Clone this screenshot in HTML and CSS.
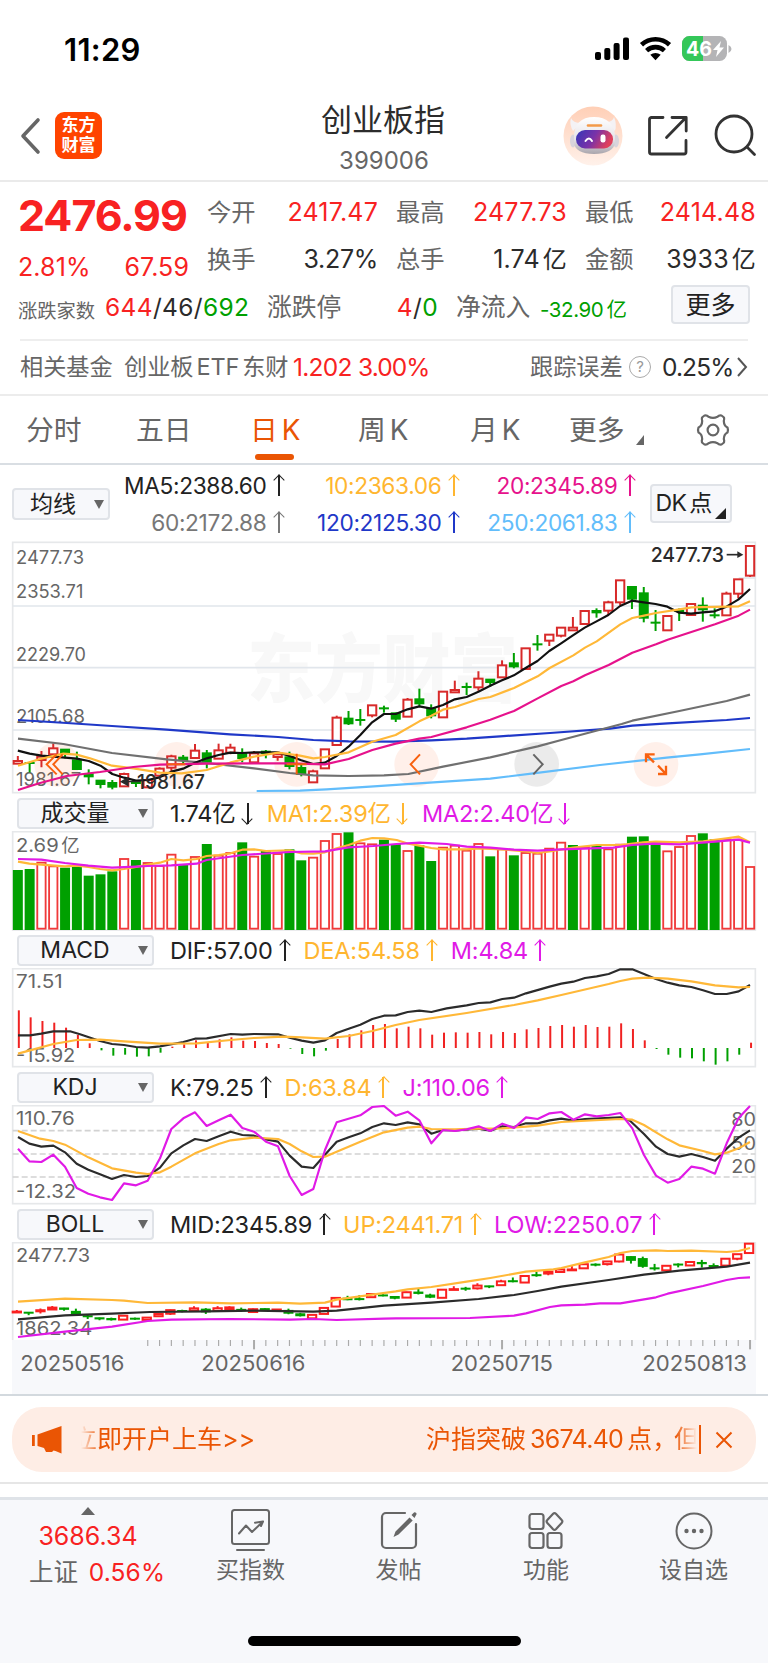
FILE: index.html
```html
<!DOCTYPE html>
<html lang="zh-CN">
<head>
<meta charset="utf-8">
<title>创业板指 399006</title>
<link rel="stylesheet" href="styles.css">
</head>
<body>
<div class="screen">
  <div class="status">
    <span class="clock">11:29</span>
    <svg class="status-icons" width="140" height="30" viewBox="0 0 140 30">
      <g fill="#000"><rect x="0" y="18" width="6" height="8" rx="2"/><rect x="9.3" y="14" width="6" height="12" rx="2"/><rect x="18.6" y="9" width="6" height="17" rx="2"/><rect x="28" y="3.5" width="6" height="22.5" rx="2"/></g>
      <g fill="none" stroke="#000" stroke-width="4.6"><path d="M46.5 10.8a20.5 20.5 0 0 1 28 0"/><path d="M51.6 16.6a13.2 13.2 0 0 1 17.8 0"/></g>
      <path d="M55.3 20.8a8 8 0 0 1 10.4 0L60.5 26.3z"/>
      <rect x="87" y="2" width="45" height="25" rx="7.5" fill="#b4b4b6"/>
      <path d="M94.500 2H108V27H94.500A7.500 7.500 0 0 1 87 19.500V9.500A7.500 7.500 0 0 1 94.500 2z" fill="#34c759"/>
      <path d="M133.500 11v8q3-1.500 3-4t-3-4z" fill="#b4b4b6"/>
      <text x="91" y="22" class="battery-text" textLength="26" lengthAdjust="spacingAndGlyphs">46</text>
      <path d="M126 7l-8 9h4.500l-1.500 7 8-9.500h-4.500z" fill="#fff"/>
    </svg>
  </div>

  <header class="header">
    <svg class="back" width="22" height="38" viewBox="0 0 22 38"><path d="M19 3L4 19l15 16" fill="none" stroke="#666" stroke-width="3.600" stroke-linecap="round" stroke-linejoin="round"/></svg>
    <div class="brand"><span>东方</span><span>财富</span></div>
    <div class="title"><h1>创业板指</h1><p>399006</p></div>
    <svg class="robot" width="60" height="60" viewBox="0 0 60 60">
      <defs>
        <linearGradient id="halo" x1="0" y1="0" x2="0" y2="1"><stop offset="0" stop-color="#ffcfb6"/><stop offset="1" stop-color="#fff1ea"/></linearGradient>
        <linearGradient id="visor" x1="0" y1="0" x2="1" y2="0.300"><stop offset="0" stop-color="#3436b8"/><stop offset="0.550" stop-color="#7a32a8"/><stop offset="1" stop-color="#e0405c"/></linearGradient>
        <linearGradient id="shell" x1="0" y1="0" x2="0" y2="1"><stop offset="0" stop-color="#fff"/><stop offset="0.600" stop-color="#e6e3e8"/><stop offset="1" stop-color="#a9a5ac"/></linearGradient>
      </defs>
      <circle cx="30" cy="30" r="29.500" fill="url(#halo)"/>
      <path d="M8 12q-2 6 2 13l8-8q-8 0-10-5zM51 11q3 7 1 14l-9-9q7 0 8-5z" fill="#f4f2f5"/>
      <ellipse cx="10" cy="35" rx="3" ry="6.500" fill="#d8d4dc"/><ellipse cx="53" cy="35" rx="3" ry="6.500" fill="#d8d4dc"/>
      <path d="M11 31C11 18 18 11 31 11S52 18 52 31v5c0 8-9 12-21 12S11 44 11 36z" fill="url(#shell)"/>
      <path d="M25 19.500h13" stroke="#f39a4a" stroke-width="2.600" fill="none" stroke-linecap="round"/>
      <rect x="13" y="24" width="37" height="18.500" rx="9" fill="url(#visor)"/>
      <path d="M22.500 35q3.500-5 6.500 0" stroke="#fff" stroke-width="2" fill="none" stroke-linecap="round"/>
      <rect x="37.500" y="28.500" width="5" height="8" rx="2.200" fill="#fff"/>
    </svg>
    <svg class="share" width="42" height="42" viewBox="0 0 42 42"><g fill="none" stroke="#333" stroke-width="2.800" stroke-linecap="round" stroke-linejoin="round"><path d="M16 2.500H4.500a2 2 0 0 0-2 2V37a2 2 0 0 0 2 2H37a2 2 0 0 0 2-2V25.500"/><path d="M25 2.500h14.200V16M39 2.500L19.500 22.500"/></g></svg>
    <svg class="search" width="44" height="44" viewBox="0 0 44 44"><g fill="none" stroke="#333" stroke-width="2.800" stroke-linecap="round"><circle cx="20" cy="20" r="18"/><path d="M33 33l7.500 7.500"/></g></svg>
  </header>

  <section class="quote">
    <div class="quote-main">
      <div class="last">
        <div class="price">2476.99</div>
        <div class="change"><span>2.81%</span><span>67.59</span></div>
      </div>
      <dl class="facts">
        <div><dt>今开</dt><dd class="up">2417.47</dd></div>
        <div><dt>最高</dt><dd class="up">2477.73</dd></div>
        <div><dt>最低</dt><dd class="up">2414.48</dd></div>
        <div><dt>换手</dt><dd class="tight">3.27%</dd></div>
        <div><dt>总手</dt><dd>1.74<i>亿</i></dd></div>
        <div><dt>金额</dt><dd>3933<i>亿</i></dd></div>
      </dl>
    </div>
    <div class="breadth">
      <span class="label small">涨跌家数</span>
      <span class="num"><b class="up">644</b>/46/<b class="down">692</b></span>
      <span class="label">涨跌停</span>
      <span class="num limit"><b class="up">4</b>/<b class="down">0</b></span>
      <span class="label flow">净流入</span>
      <span class="down net">-32.90<i>亿</i></span>
      <button class="more">更多</button>
    </div>
    <div class="fund">
      <span class="label f-name">相关基金</span>
      <span class="label etf">创业板<i>ETF</i>东财</span>
      <span class="up f-price">1.202</span>
      <span class="up f-pct">3.00%</span>
      <span class="label track">跟踪误差</span>
      <span class="help">?</span>
      <span class="f-err">0.25%</span>
      <svg width="12" height="22" viewBox="0 0 12 22"><path d="M2 2l8 9-8 9" fill="none" stroke="#555" stroke-width="2"/></svg>
    </div>
  </section>

  <nav class="tabs">
    <span>分时</span><span>五日</span><span class="active">日<i>K</i></span><span>周<i>K</i></span><span>月<i>K</i></span><span class="tab-more">更多</span>
    <svg class="corner" width="8" height="10" viewBox="0 0 8 10"><path d="M8 0v10H0z" fill="#666"/></svg>
    <svg class="gear" width="34" height="34" viewBox="-17 -17 34 34"><g fill="none" stroke="#666" stroke-width="2.200" stroke-linejoin="round"><path d="M-8.500-14.500Q-6-15-4.500-13.200Q0-11 4.500-13.200Q6-15 8.500-14.500L11-12.500Q11.500-10.500 10.800-9Q11-4 14.500-2.500Q15.500 0 14.500 2.500Q11 4 10.800 9Q11.500 10.500 11 12.500L8.500 14.500Q6 15 4.500 13.200Q0 11-4.500 13.200Q-6 15-8.500 14.500L-11 12.500Q-11.500 10.500-10.800 9Q-11 4-14.500 2.500Q-15.500 0-14.500-2.500Q-11-4-10.800-9Q-11.500-10.500-11-12.500Z"/><circle r="5.400"/></g></svg>
  </nav>

  <section class="averages">
    <button class="picker">均线<i class="caret"></i></button>
    <div class="ma-grid">
      <span class="c-ink">MA5:2388.60<i class="arr"></i></span><span class="c-gold">10:2363.06<i class="arr"></i></span><span class="c-pink">20:2345.89<i class="arr"></i></span>
      <span class="c-gray">60:2172.88<i class="arr"></i></span><span class="c-blue">120:2125.30<i class="arr"></i></span><span class="c-sky">250:2061.83<i class="arr"></i></span>
    </div>
    <button class="dk"><span>DK</span>点<svg width="11" height="11" viewBox="0 0 11 11"><path d="M11 0v11H0z" fill="#222"/></svg></button>
  </section>

  <svg class="chart main-chart" id="kline" viewBox="0 15 2304 762"></svg>

  <div class="ind-row">
    <button class="picker wide"><span>成交量</span><i class="caret"></i></button>
    <span class="c-ink">1.74亿<i class="arr dn"></i></span><span class="c-gold">MA1:2.39亿<i class="arr dn"></i></span><span class="c-mag">MA2:2.40亿<i class="arr dn"></i></span>
  </div>
  <svg class="chart sub-chart" id="volume" viewBox="0 108 2304 300"></svg>

  <div class="ind-row">
    <button class="picker wide"><span>MACD</span><i class="caret"></i></button>
    <span class="c-ink">DIF:57.00<i class="arr"></i></span><span class="c-gold">DEA:54.58<i class="arr"></i></span><span class="c-mag">M:4.84<i class="arr"></i></span>
  </div>
  <svg class="chart sub-chart" id="macd" viewBox="0 519 2304 300"></svg>

  <div class="ind-row">
    <button class="picker wide"><span>KDJ</span><i class="caret"></i></button>
    <span class="c-ink">K:79.25<i class="arr"></i></span><span class="c-gold">D:63.84<i class="arr"></i></span><span class="c-mag">J:110.06<i class="arr"></i></span>
  </div>
  <svg class="chart sub-chart" id="kdj" viewBox="0 105 2304 300"></svg>

  <div class="ind-row">
    <button class="picker wide"><span>BOLL</span><i class="caret"></i></button>
    <span class="c-ink">MID:2345.89<i class="arr"></i></span><span class="c-gold">UP:2441.71<i class="arr"></i></span><span class="c-mag">LOW:2250.07<i class="arr"></i></span>
  </div>
  <svg class="chart boll-chart" id="boll" viewBox="0 516 2304 456"></svg>

  <div class="promo-wrap">
    <div class="promo">
      <svg class="horn" width="32" height="28" viewBox="0 0 32 28"><path d="M1 9h2.800v11H1zM6.500 8.500L30.500 0v27.500l-6-2.500-2-.500-1.500 1.500h-6l-2-4-6.500-2z" fill="#ea5504"/></svg>
      <div class="ticker"><span class="t1">立即开户上车&gt;&gt;</span><span class="t2">沪指突破<i>3674.40</i>点，</span><span class="t3">但</span></div>
      <i class="bar"></i>
      <svg class="close" width="18" height="18" viewBox="0 0 18 18"><path d="M1.500 1.500l15 15m0-15l-15 15" stroke="#ea5504" stroke-width="2" fill="none"/></svg>
    </div>
  </div>

  <footer class="dock">
    <div class="index">
      <svg width="14" height="8" viewBox="0 0 14 8"><path d="M7 0l7 8H0z" fill="#666"/></svg>
      <b>3686.34</b>
      <p>上证 <em>0.56%</em></p>
    </div>
    <div class="item">
      <svg width="42" height="42" viewBox="0 0 42 42"><g fill="none" stroke="#666" stroke-width="2" stroke-linecap="round" stroke-linejoin="round"><rect x="2" y="1" width="37" height="34" rx="2.500"/><path d="M7 41h27M9 24.500l7-8 6 6.500L33 12.500l-8 1.200M33 12.500l-2 4.500"/></g></svg><span>买指数</span></div>
    <div class="item">
      <svg width="42" height="42" viewBox="0 0 42 42"><g fill="none" stroke="#666" stroke-width="2.200" stroke-linecap="round"><path d="M27 4H8a4 4 0 0 0-4 4v27a4 4 0 0 0 4 4h26a4 4 0 0 0 4-4V15"/></g><path d="M31.500 8.500l3.200 3L20.500 25.500 15.500 28l2-5.500zM33.500 6l2.500-2.500q1-.700 2 .300t.200 2L36.500 9z" fill="#666"/></svg><span>发帖</span></div>
    <div class="item">
      <svg width="42" height="42" viewBox="0 0 42 42"><g fill="none" stroke="#666" stroke-width="2.200"><rect x="4.500" y="5" width="14" height="15" rx="2.500"/><rect x="4.500" y="24" width="14" height="15" rx="2.500"/><rect x="22.500" y="24" width="14" height="15" rx="2.500"/><path d="M28.100 4.800q1.400-1.400 2.800 0l5.800 6.300q1.400 1.400 0 2.800l-5.800 6.300q-1.400 1.400-2.800 0l-5.800-6.300q-1.400-1.400 0-2.800z"/></g></svg><span>功能</span></div>
    <div class="item">
      <svg width="42" height="42" viewBox="0 0 42 42"><circle cx="21" cy="22" r="17.500" fill="none" stroke="#666" stroke-width="2"/><g fill="#666"><circle cx="13.500" cy="22" r="2.200"/><circle cx="21" cy="22" r="2.200"/><circle cx="28.500" cy="22" r="2.200"/></g></svg><span>设自选</span></div>
    <div class="home"></div>
  </footer>
</div>
<script src="charts.js"></script>
</body>
</html>
```
FILE: styles.css
```css
* { box-sizing: border-box; }
body { margin: 0; background: #fff; font-family: Inter, "Noto Sans CJK SC", sans-serif; color: #2b2b2b; }
i, em { font-style: normal; }
h1, p, dl, dd { margin: 0; }
button { font: inherit; color: #222; padding: 0; margin: 0; background: #f7f8fb; border: 2px solid #e0e3e8; border-radius: 4px; }
svg { display: block; flex: none; }
.screen { width: 768px; height: 1663px; overflow: hidden; white-space: nowrap; }

.up { color: #f82222; }
.down { color: #00a000; }
.label { color: #666; }
.c-ink { color: #222; }
.c-gold { color: #ffb630; }
.c-pink { color: #e6128c; }
.c-gray { color: #777; }
.c-blue { color: #1f38c8; }
.c-sky { color: #62bdfb; }
.c-mag { color: #e01ae6; }

.status { height: 90px; display: flex; justify-content: space-between; padding: 34px 33px 0 64px; }
.clock { font-size: 31px; line-height: 31px; font-weight: 600; letter-spacing: 0.3px; color: #000; }
.battery-text { font: 700 20px Inter, sans-serif; fill: #fff; }

.header { height: 92px; display: flex; align-items: flex-start; border-bottom: 2px solid #eaeaea; padding-left: 19px; }
.back { margin-top: 27px; }
.brand { width: 47px; height: 47px; margin: 22px 0 0 14px; border-radius: 9px; background: #ff4400; color: #fff; font-size: 17px; font-weight: 700; line-height: 20px; padding-top: 3px; display: flex; flex-direction: column; align-items: center; }
.title { width: 200px; margin: 8px 80px 0 181px; text-align: center; }
.title h1 { font-size: 31px; font-weight: 400; line-height: 44px; color: #2c2c2c; }
.title p { font-size: 24px; line-height: 38px; color: #666; padding-left: 2px; }
.robot { margin-top: 16px; }
.share { margin: 25px 0 0 24px; }
.search { margin: 24px 0 0 25px; }

.quote { height: 214px; padding-top: 7px; border-bottom: 2px solid #ececec; }
.quote-main { display: flex; padding-left: 18px; height: 94px; }
.last { width: 189px; }
.price { font-size: 43px; line-height: 52px; font-weight: 700; color: #f82222; letter-spacing: -1.05px; }
.change { display: flex; justify-content: space-between; width: 171px; font-size: 25px; line-height: 52px; color: #f82222; letter-spacing: 0.1px; }
.facts { display: grid; grid-template-columns: repeat(3, 169px); column-gap: 20px; grid-auto-rows: 47px; }
.facts div { display: flex; justify-content: space-between; line-height: 47px; }
.facts dt { font-size: 24.3px; color: #666; }
.facts dd { font-size: 25px; letter-spacing: 0.2px; margin-right: -2px; }
.facts dd.tight { letter-spacing: -0.3px; }
.facts dd i { margin-left: 3px; font-size: 24px; }
.breadth { display: grid; grid-template-columns: 88px 161px 74px 95px 105px 130px 79px; padding-left: 18px; height: 56px; line-height: 48px; font-size: 24.5px; }
.breadth .label { font-size: 24.8px; }
.breadth .small { font-size: 19.3px; padding-top: 4px; }
.num { letter-spacing: 0.35px; margin-left: -1px; }
.num b { font-weight: 400; }
.limit { text-align: right; margin-right: -2px; }
.breadth .flow { padding-left: 20px; }
.net { font-size: 20.5px; padding-top: 3px; letter-spacing: -0.4px; margin-left: -1px; }
.net i { margin-left: 3px; }
.more { height: 39px; margin-top: 2px; line-height: 34px; font-size: 25px; }
.fund { margin: 0 20px; border-top: 2px solid #eee; height: 54px; line-height: 52px; display: flex; align-items: center; font-size: 23.2px; }
.f-name { width: 104px; }
.etf { width: 169px; }
.etf i { font-size: 23.5px; margin: 0 3px; letter-spacing: -0.2px; }
.f-price { width: 65px; font-size: 24.5px; letter-spacing: -0.7px; }
.f-pct { width: 172px; font-size: 24.5px; letter-spacing: -0.9px; }
.track { width: 99px; }
.help { width: 22px; height: 22px; border: 1.5px solid #aaa; border-radius: 50%; font-size: 15px; line-height: 19px; text-align: center; color: #999; margin-right: 11px; }
.f-err { width: 74px; font-size: 24.5px; letter-spacing: -0.9px; }

.tabs { height: 69px; border-bottom: 2px solid #d9dee3; display: grid; grid-template-columns: 110px 114px 108px 112px 99px 67px 60px auto; padding-left: 26px; font-size: 27.8px; line-height: 68px; color: #666; }
.tabs i { margin-left: 4px; }
.tabs .active { color: #ea5504; display: flex; position: relative; }
.tabs .active::after { content: ""; position: absolute; left: 5px; bottom: 4px; width: 39px; height: 6px; border-radius: 3px; background: #ea5504; }
.corner { margin-top: 39px; }
.gear { margin-top: 17px; }

.averages { height: 75px; display: flex; align-items: flex-start; padding-left: 12px; }
.picker { width: 98px; height: 32px; margin-top: 23px; font-size: 23px; line-height: 27px; display: flex; align-items: center; padding: 0 4px 0 16px; justify-content: space-between; }
.caret { border: 5px solid transparent; border-top: 9px solid #666; border-bottom: 0; }
.ma-grid { display: grid; grid-template-columns: 174px 175px 176px; grid-auto-rows: 37px; line-height: 37px; padding-top: 2px; margin-left: -0.5px; font-size: 22.7px; letter-spacing: -0.35px; text-align: right; }
.arr { display: inline-block; position: relative; width: 10px; height: 21px; margin-left: 7px; vertical-align: -2px; }
.arr::before { content: ""; position: absolute; left: 4px; top: 0; width: 2px; height: 21px; background: currentColor; }
.arr::after { content: ""; position: absolute; left: 1.5px; top: 1px; width: 7px; height: 7px; border: solid currentColor; border-width: 1.6px 0 0 1.6px; transform: rotate(45deg); }
.arr.dn { transform: rotate(180deg); }
.dk { width: 82px; height: 39px; margin: 19px 0 0 15px; font-size: 23px; line-height: 34px; display: flex; padding-left: 4px; }
.dk span { margin-right: 3px; letter-spacing: -0.6px; }
.dk svg { margin: 22px 0 0 3px; }

.chart { width: 768px; overflow: hidden; }
.main-chart { height: 254px; }
.sub-chart { height: 100px; }
.boll-chart { height: 152px; }
.ind-row { height: 37px; padding: 4px 0 0 17px; display: flex; font-size: 23.5px; line-height: 32px; letter-spacing: -0.2px; }
.ind-row > span { margin-right: 14px; }
.picker.wide { width: 137px; height: 31px; margin: 0 16px 0 0; padding: 0 4px 0 0; }
.picker.wide span { flex: 1; text-align: center; padding-right: 7px; }

.grid { stroke: #e1e6ec; stroke-width: 5; fill: none; }
.dash { stroke: #d2d2d2; stroke-width: 5; stroke-dasharray: 18 9; }
.axis { font-family: Inter, sans-serif; font-size: 55px; fill: #666; }
.date { font-family: Inter, sans-serif; font-size: 64px; fill: #666; }
.mark { font-family: Inter, sans-serif; font-size: 60px; font-weight: 500; fill: #2b2b2b; }
.water { font-family: "Noto Sans CJK SC", sans-serif; font-weight: 900; font-size: 222px; fill: #f8f8f8; }

.promo-wrap { height: 90px; border-top: 2px solid #d3d9de; border-bottom: 2px solid #e6e6e6; padding: 11px 12px 0; }
.promo { height: 65px; border-radius: 30px; background: #feede5; color: #ea5504; display: flex; align-items: center; padding-left: 19px; }
.ticker { width: 618px; margin-left: 18px; height: 40px; line-height: 39px; font-size: 25px; display: flex; overflow: hidden; mask-image: linear-gradient(90deg, transparent, #000 20px, #000 594px, transparent 616px); }
.t1 { width: 367px; margin-left: -9px; letter-spacing: 0; }
.t2 { width: 248px; }
.t2 i { margin: 0 4px; letter-spacing: -0.7px; }
.bar { width: 2px; height: 29px; background: #ea5504; margin-right: 14px; }

.dock { position: relative; margin-top: 13px; height: 166px; border-top: 3px solid #dfe3e8; background: #f7f8fb; display: grid; grid-template-columns: 176px 149px 147px 148px 147px; color: #666; }
.index { display: flex; flex-direction: column; align-items: center; padding-top: 7px; }
.index b { font-weight: 400; font-size: 25px; line-height: 43px; color: #f82222; letter-spacing: 0; }
.index p { font-size: 24.5px; line-height: 28px; padding-left: 18px; }
.index em { color: #f82222; letter-spacing: 0.1px; margin-left: 4px; }
.item { display: flex; flex-direction: column; align-items: center; padding-top: 9px; }
.item span { font-size: 23px; line-height: 34px; margin-top: 2px; }
.home { position: absolute; left: 248px; bottom: 17px; width: 273px; height: 10px; border-radius: 5px; background: #000; }
```
FILE: charts.js
```js
const RED = '#d82a2a', BRIGHT = '#fa2020', GREEN = '#00a000';
const INK = '#2b2b2b', GOLD = '#ffb838', MAG = '#e01ae6';
const FIRST = 53.5, STEP = 35.43;
const cx = i => FIRST + i * STEP;

const line = (pts, color, w = 6.5) =>
  `<polyline points="${pts}" fill="none" stroke="${color}" stroke-width="${w}" stroke-linejoin="round"/>`;
const label = (x, y, s, len, cls = 'axis') =>
  `<text class="${cls}" x="${x - 3}" y="${y}" textLength="${len + 4}" lengthAdjust="spacingAndGlyphs">${s}</text>`;
const frame = (top, bottom) => `<rect class="grid" style="stroke:#e6e8ea" x="38" y="${top}" width="2228" height="${bottom - top}"/>`;
const put = (id, s) => { document.getElementById(id).innerHTML = s; };

// [direction, body top, body bottom, wick top, wick bottom]
const candles = [
  ['r',678,686,663,686],['g',682,686,682,712],['r',665,675,648,697],['r',640,658,625,658],['g',642,658,642,670],
  ['g',674,704,650,704],['g',716,726,703,748],['g',735,749,735,760],['g',742,757,735,763],['r',717,754,713,754],
  ['g',739,746,735,756],['r',735,757,735,757],['r',701,722,697,722],['r',664,698,659,710],['g',666,677,660,685],
  ['r',647,669,627,669],['g',653,682,645,700],['r',646,671,626,671],['r',638,653,626,658],['g',655,671,640,682],
  ['r',655,682,648,682],['g',648,656,645,670],['r',658,666,655,677],['g',665,695,650,703],['g',697,719,690,724],
  ['r',709,742,704,742],['r',643,700,643,700],['r',548,630,542,630],['g',549,567,528,570],['g',553,557,522,572],
  ['r',511,541,511,547],['g',518,522,512,533],['g',533,553,533,561],['r',494,545,489,545],['g',491,507,461,515],
  ['g',519,543,508,550],['r',470,547,470,547],['r',465,472,437,472],['g',454,458,443,480],['r',431,457,409,467],
  ['g',432,443,432,455],['r',391,427,376,427],['g',383,396,354,400],['r',340,402,340,402],['g',326,330,300,347],
  ['r',299,317,299,333],['r',278,302,278,307],['r',278,286,246,286],['r',228,267,228,267],['g',226,234,220,248],
  ['r',202,227,197,240],['r',136,202,136,210],['g',154,193,154,222],['g',173,250,156,262],['g',261,265,225,288],
  ['r',243,286,243,286],['g',225,230,220,258],['r',207,240,207,240],['g',210,225,187,260],['g',239,243,220,250],
  ['r',176,241,170,241],['r',133,176,133,190],['r',33,122,33,126]
];

function drawCandles(map, red, dx, sw) {
  return candles.map(([d, t, b, wt, wb], i) => {
    const x = cx(i) + dx, [T, B, WT, WB] = [t, b, wt, wb].map(map);
    if (d === 'g') {
      return `<path d="M${x} ${WT}V${WB}" stroke="${GREEN}" stroke-width="6"/><rect x="${x - 15}" y="${T - 1}" width="30" height="${Math.max(B - T, 4) + 2}" fill="${GREEN}"/>`;
    }
    return `<path d="M${x} ${WT}V${T}M${x} ${B}V${WB}" stroke="${red}" stroke-width="6"/><rect x="${x - 12.5}" y="${T}" width="25" height="${Math.max(B - T, 1)}" fill="#fff" stroke="${red}" stroke-width="${sw}"/>`;
  }).join('');
}

// Price chart
const ma5y = [647,656,662,665,668,671,678,692,717,728,737,735,727,710,701,683,670,660,653,654,652,652,652,663,676,687,683,663,635,600,562,537,537,523,514,521,510,493,486,470,452,436,421,399,378,348,325,301,278,259,240,213,197,202,207,215,233,236,232,229,215,194,162];
const ma5 = ma5y.map((y, i) => `${cx(i)},${y}`).join(' ');
const disc = (x, c = 'rgba(255,90,20,.09)') => `<circle cx="${x}" cy="688" r="67" fill="${c}"/>`;
const glyph = (d, c = '#f8610f', w = 6) => `<path d="${d}" fill="none" stroke="${c}" stroke-width="${w}"/>`;
put('kline',
  `<text class="water" x="742" y="482" textLength="812" lengthAdjust="spacingAndGlyphs">东方财富</text>` +
  frame(22, 773) + `<path class="grid" d="M38 213H2266M38 398H2266M38 585H2266"/><path d="M2216 129H2266" class="grid"/>` +
  label(51, 86, '2477.73', 200) + label(51, 189, '2353.71', 198) + label(51, 378, '2229.70', 206) +
  label(51, 565, '2105.68', 203) + label(51, 753, '1981.67', 192) +
  disc(170) + disc(530) + disc(890) + disc(1250) + disc(1610, 'rgba(60,60,60,.10)') + disc(1968) +
  drawCandles(v => v, RED, 0, 6) +
  line('770,768 900,767 980,763 1110,755 1300,742 1471,731 1600,715 1800,690 2000,668 2100,658 2250,642', '#62bdfb') +
  line('54,555 200,564 336,573 500,584 690,598 834,606 940,615 1046,619 1180,620 1294,616 1400,611 1500,604 1650,594 1830,581 1897,572 2003,565 2180,555 2250,549', '#1f38c8') +
  line('54,611 190,627 336,654 500,673 620,684 762,700 869,714 940,721 1046,723 1152,721 1225,717 1329,695 1471,667 1613,634 1684,615 1865,567 1897,557 2038,528 2180,498 2250,479', '#707070') +
  line(ma5, '#111') +
  line('54,692 120,672 190,656 230,659 270,670 336,692 400,700 480,713 545,715 620,705 690,683 762,665 834,653 900,662 940,670 975,666 1046,652 1117,620 1187,600 1258,559 1294,542 1329,524 1365,516 1436,492 1471,486 1542,459 1613,424 1649,399 1720,361 1755,338 1790,319 1861,268 1897,249 1932,242 1968,234 2038,223 2074,217 2216,214 2250,199', GOLD) +
  line('54,765 120,744 200,723 300,711 400,696 480,689 620,686 762,685 870,685 975,688 1046,672 1117,645 1187,626 1258,611 1294,606 1400,577 1471,554 1542,528 1613,490 1684,453 1720,439 1755,421 1826,390 1897,353 1968,328 2003,314 2145,268 2216,242 2250,224', '#e6128c') +
  glyph('M170 658L140 688L170 718M188 658L160 688L188 718') + glyph('M500 688H556') + glyph('M860 688H920M890 656V718') +
  glyph('M1260 658L1232 688L1260 718') + glyph('M1600 658L1628 688L1600 718', '#666') +
  glyph('M1938 682V658H1964M1938 658L1962 682M1974 717H1998V692M1998 717L1974 692', '#f8610f', 7) +
  label(414, 762, '1981.67', 200, 'mark') + `<path d="M364 740L384 729V751ZM380 740H420" stroke="${INK}" stroke-width="4" fill="${INK}"/>` +
  label(1955, 80, '2477.73', 216, 'mark') + `<path d="M2180 59H2215" stroke="${INK}" stroke-width="5"/><path d="M2230 59L2212 49V69Z" fill="${INK}"/>`);

// Volume
const vols = 'g225 g222 r203 r214 g218 g214 g242 g238 g229 r192 g195 r204 r213 r179 g208 r186 g147 r182 r174 g142 r185 g167 r177 g163 g196 r188 r138 r117 g112 r145 r148 g134 g147 r168 g151 g198 r158 r152 r167 r147 g184 r163 g181 r174 r176 r161 r143 g150 r156 g150 r163 r149 g125 g124 g146 r169 r156 r123 g115 g133 r134 r134 r216'.split(' ');
put('volume', frame(110, 405) + label(51, 170, '2.69', 124) +
  `<text class="axis" style="font-family:'Noto Sans CJK SC',sans-serif" x="184" y="170">亿</text>` +
  vols.map((v, i) => {
    const y = +v.slice(1), x = cx(i);
    return v[0] === 'g' ? `<rect x="${x - 15}" y="${y}" width="30" height="${405 - y}" fill="${GREEN}"/>`
      : `<rect x="${x - 12.5}" y="${y}" width="25" height="${401 - y}" fill="#fff" stroke="#f03a3a" stroke-width="5.500"/>`;
  }).join('') +
  line('54,200 88,206 124,209 195,214 230,212 265,216 300,222 336,226 372,222 408,216 443,209 480,203 514,192 550,196 590,192 620,183 656,180 692,175 727,164 762,163 798,168 869,166 905,175 940,176 975,172 1010,160 1046,150 1081,137 1117,129 1152,130 1190,135 1225,146 1258,152 1294,159 1329,163 1400,163 1436,160 1507,163 1578,169 1613,174 1649,169 1720,158 1790,150 1861,150 1930,142 1968,140 2038,142 2110,139 2180,130 2216,125 2250,142', GOLD) +
  line('54,192 124,194 195,204 265,212 336,218 408,215 443,213 514,211 590,206 620,195 727,180 869,171 975,169 1046,157 1120,153 1190,147 1258,143 1340,147 1400,155 1471,158 1542,164 1613,167 1684,163 1840,158 1897,150 1960,146 2038,148 2145,140 2216,134 2250,143', MAG));

// MACD
const hist = [646,667,678,683,698,720,745,766,782,779,785,784,773,755,748,736,743,733,727,737,738,744,747,761,777,784,767,732,718,706,690,687,700,695,700,719,713,712,713,711,718,711,714,703,699,693,690,695,690,696,695,685,702,736,762,779,788,790,799,809,799,779,743];
put('macd', frame(521, 815) + label(51, 579, '71.51', 136) + label(51, 800, '-15.92', 174) +
  hist.map((y, i) => `<path d="M${cx(i) + 3} 759V${y}" stroke="${y < 759 ? '#f02222' : GREEN}" stroke-width="6"/>`).join('') +
  line('54,721 90,721 124,716 160,709 210,709 240,718 300,738 336,747 372,750 408,756 443,758 480,754 550,741 585,731 620,730 692,717 727,719 762,717 834,718 869,728 905,737 940,743 975,736 1010,714 1046,701 1081,689 1117,672 1152,662 1187,661 1223,651 1258,647 1294,651 1340,640 1400,631 1436,624 1471,622 1507,612 1542,608 1578,595 1649,575 1684,566 1720,560 1755,549 1790,544 1826,537 1861,523 1897,523 1932,537 1968,552 2003,563 2038,571 2074,576 2109,586 2145,597 2180,597 2216,589 2250,570', INK) +
  line('54,776 90,766 160,747 230,735 300,734 372,739 480,746 590,745 692,735 762,729 850,725 905,727 975,731 1046,723 1117,708 1187,690 1258,675 1400,654 1542,630 1613,616 1684,600 1826,567 1861,558 1897,551 1940,548 2003,551 2074,559 2145,571 2216,577 2250,576', GOLD));

// KDJ
put('kdj', frame(107, 401) + `<path class="dash" d="M38 182H2266M38 252H2266M38 321H2266"/>` +
  label(51, 164, '110.76', 172) + label(51, 384, '-12.32', 176) +
  label(2197, 168, '80', 70) + label(2197, 239, '50', 70) + label(2197, 310, '20', 70) +
  line('54,201 88,221 124,230 160,227 195,247 230,281 265,299 300,313 336,327 372,315 408,321 443,318 480,293 514,250 550,226 585,207 620,213 656,199 692,185 727,195 762,197 798,208 834,215 869,257 905,290 940,294 975,254 1010,215 1046,202 1081,190 1117,171 1152,160 1187,165 1223,157 1258,163 1294,191 1329,180 1365,181 1436,176 1471,182 1507,169 1542,171 1578,160 1613,160 1649,151 1684,146 1720,152 1755,147 1861,142 1890,152 1932,192 1968,230 2003,252 2038,260 2074,252 2109,261 2145,272 2180,236 2216,203 2250,181', INK) +
  line('54,183 120,206 160,213 195,224 265,262 336,295 408,308 443,312 480,307 514,290 585,250 656,222 692,211 762,203 834,207 869,222 905,244 940,261 975,260 1010,245 1081,215 1152,187 1223,173 1258,170 1294,177 1365,178 1436,176 1507,175 1578,170 1613,167 1684,156 1861,147 1897,149 1932,165 1968,187 2003,208 2038,226 2109,243 2145,253 2180,248 2216,235 2250,216', GOLD) +
  line('54,236 88,274 124,276 160,254 195,290 230,354 265,371 300,382 336,390 372,340 408,346 443,332 480,265 514,177 550,145 585,127 620,168 656,151 692,134 727,174 762,185 798,215 834,229 869,318 905,375 940,357 975,240 1010,157 1081,136 1117,111 1152,108 1187,137 1223,125 1258,151 1294,220 1329,180 1365,183 1400,178 1436,169 1471,183 1507,161 1542,174 1578,142 1613,147 1649,130 1684,126 1720,149 1755,133 1790,139 1826,135 1861,129 1897,175 1932,255 1968,317 2003,338 2038,327 2074,290 2109,296 2145,311 2180,220 2216,144 2250,108', MAG));

// BOLL with date axis
let ticks = '';
for (let i = 11; i < 63; i++) {
  const major = i === 20 || i === 41 || i === 62;
  ticks += `<path d="M${cx(i)} 810V${major ? 838 : 828}" stroke="#aaa" stroke-width="${major ? 6 : 3.5}"/>`;
}
put('boll', `<path class="grid" style="stroke:#e6e8ea" d="M38 810V518H2266V810"/><rect x="36" y="810" width="2232" height="162" fill="#f7f8fb"/>` +
  label(51, 575, '2477.73', 218) + label(51, 795, '1862.34', 225) + ticks +
  drawCandles(v => 521 + (v - 33) * 0.316, BRIGHT, -3, 6) +
  line('54,695 195,686 336,690 372,692 443,699 585,697 692,700 834,698 900,701 975,698 1010,689 1117,674 1187,664 1223,658 1294,651 1400,635 1471,624 1578,605 1660,598 1684,594 1755,577 1826,561 1861,549 1897,543 1968,541 2003,543 2074,542 2180,546 2216,543 2250,534', GOLD) +
  line('54,748 195,736 336,731 450,726 620,724 762,722 940,725 1010,722 1152,707 1294,698 1436,687 1542,675 1613,663 1684,650 1826,630 1932,614 2038,602 2180,590 2250,578', INK) +
  line('54,801 195,785 336,770 443,753 514,749 690,747 870,749 940,747 1010,750 1152,746 1187,745 1410,744 1542,737 1578,730 1650,711 1684,706 1755,704 1800,700 1861,700 1968,682 2003,671 2109,648 2180,630 2216,624 2250,622', MAG) +
  label(64, 903, '20250516', 308, 'date') + label(607, 903, '20250616', 308, 'date') +
  label(1355, 903, '20250715', 303, 'date') + label(1930, 903, '20250813', 310, 'date'));
```
